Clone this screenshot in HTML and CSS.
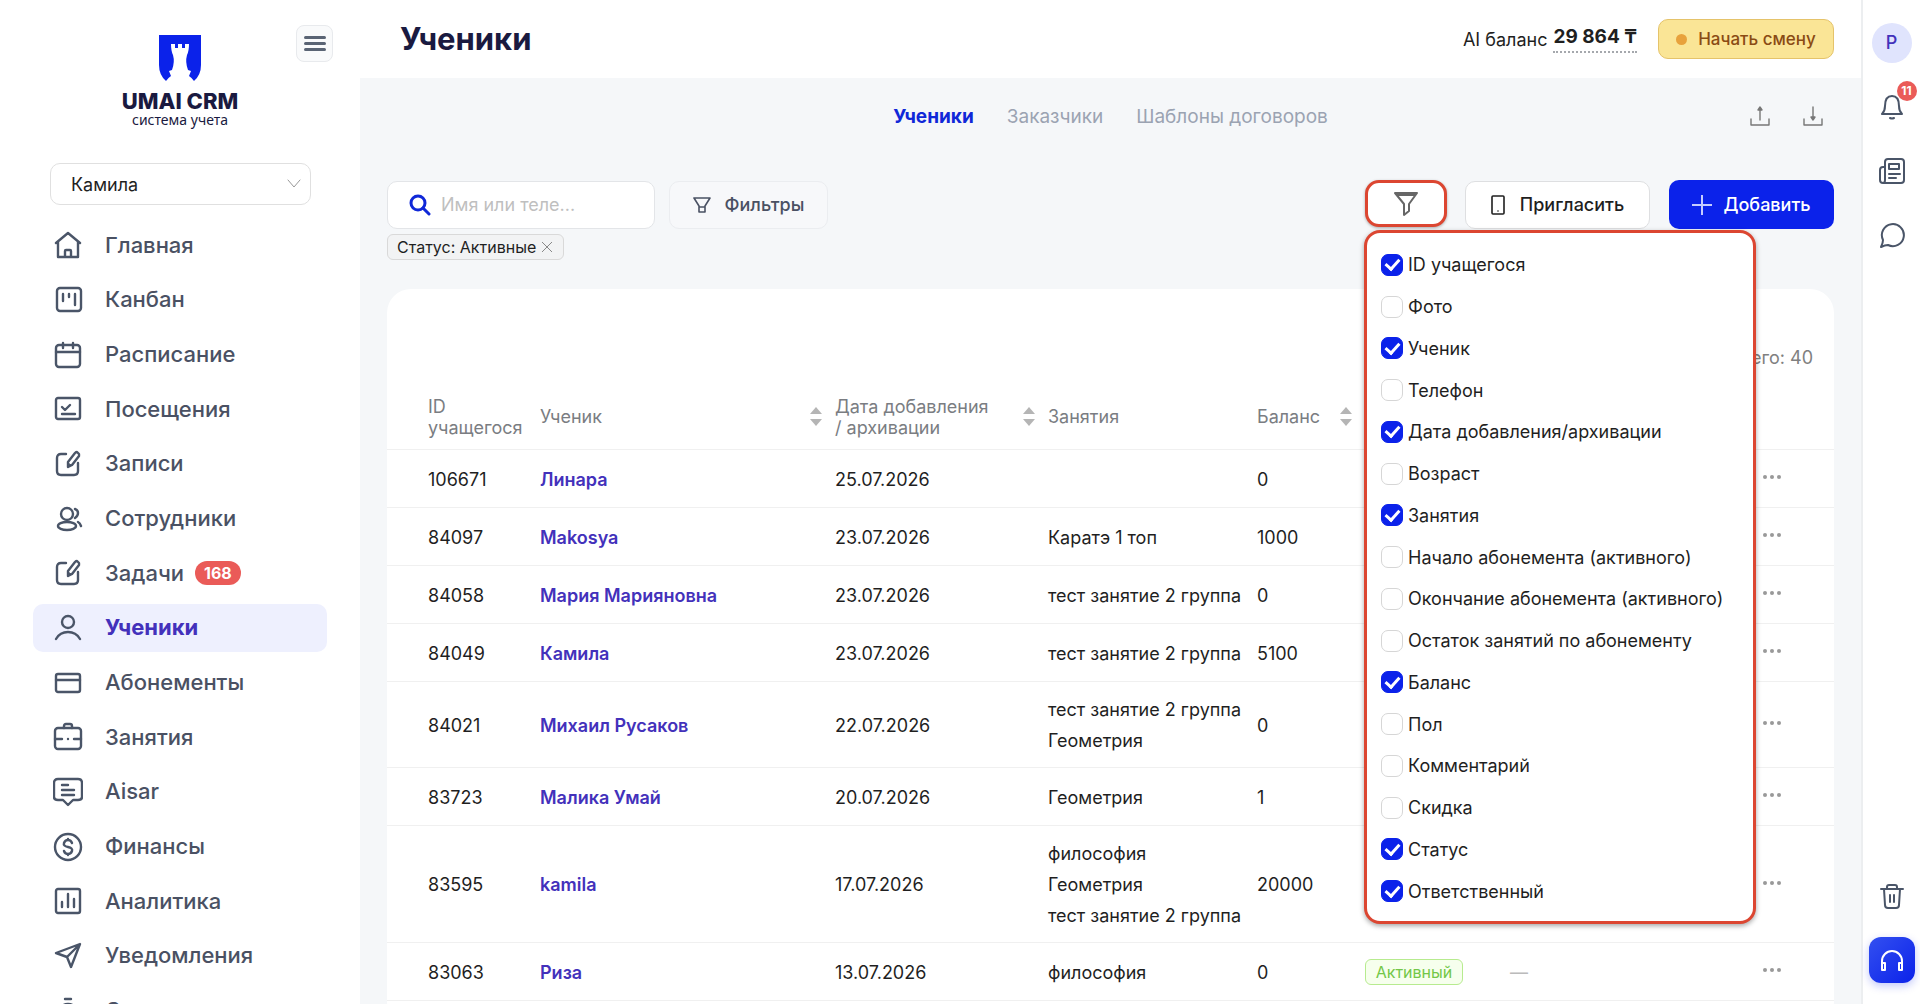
FILE: index.html
```html
<!DOCTYPE html>
<html lang="ru">
<head>
    <meta charset="UTF-8">
    <meta name="viewport" content="width=device-width, initial-scale=1.0">
    <title>Ученики - UMAI CRM</title>
    <link rel="stylesheet" href="styles.css">
</head>
<body>
    <aside class="sidebar">
        <button class="burger" type="button" aria-label="Меню"><span></span><span></span><span></span></button>
        <div class="logo">
            <svg width="42" height="46" viewBox="0 0 42 46">
                <path fill="#0b22ea" d="M0 0h42v30q0 10-7 16-2-3-5-5l2-5-3-1q-3-8-1-15 2-4 2-11h-4v4h-3V9h-4v4h-3V9h-4q0 7 2 11 2 7-1 15l-3 1 2 5q-3 2-5 5Q0 40 0 30z"/>
            </svg>
            <div class="logo-name">UMAI CRM</div>
            <div class="logo-sub">система учета</div>
        </div>
        <div class="branch">
            <select aria-label="Филиал"><option>Камила</option></select>
            <svg width="14" height="10" viewBox="0 0 14 10"><path d="M1 1l6 7 6-7"/></svg>
        </div>
        <nav class="menu">
            <a href="#"><svg viewBox="0 0 30 30"><path d="M3 13L15 3l12 10M5 12v15h20V12M12 27v-6q0-1 1-1h4q1 0 1 1v6"/></svg><span>Главная</span></a>
            <a href="#"><svg viewBox="0 0 30 30"><rect x="4" y="3" width="24" height="23" rx="3"/><path d="M10 9v7M16 9v3M22 9v11"/></svg><span>Канбан</span></a>
            <a href="#"><svg viewBox="0 0 30 30"><rect x="3" y="5" width="24" height="22" rx="3"/><path d="M3 12h24M10 3v5M20 3v5"/></svg><span>Расписание</span></a>
            <a href="#"><svg viewBox="0 0 30 30"><rect x="3" y="4" width="24" height="21" rx="2"/><path d="M9 13l3 3 5-5M9 20h13"/></svg><span>Посещения</span></a>
            <a href="#"><svg viewBox="0 0 30 30"><path d="M13 5H8Q4 5 4 9v13q0 4 4 4h13q4 0 4-4v-8M15 13l7-9q1-1 2-1l2 2v2l-7 9-4 2z"/><path class="fill" d="M15 14l3 2-3 2z"/></svg><span>Записи</span></a>
            <a href="#"><svg viewBox="0 0 30 30"><circle cx="14" cy="10" r="6"/><ellipse cx="14" cy="22" rx="9" ry="4"/><path d="M22 5q3 1 3 4t-3 5M25 18q2 1 3 4"/></svg><span>Сотрудники</span></a>
            <a href="#"><svg viewBox="0 0 30 30"><path d="M13 5H8Q4 5 4 9v13q0 4 4 4h13q4 0 4-4v-8M15 13l7-9q1-1 2-1l2 2v2l-7 9-4 2z"/><path class="fill" d="M15 14l3 2-3 2z"/></svg><span>Задачи</span><b class="count">168</b></a>
            <a href="#" class="on"><svg viewBox="0 0 30 30"><circle cx="15" cy="9" r="6"/><path d="M3 26q4-7 12-7t12 7"/></svg><span>Ученики</span></a>
            <a href="#"><svg viewBox="0 0 30 30"><rect x="3" y="6" width="24" height="18" rx="2"/><path d="M3 12h24"/></svg><span>Абонементы</span></a>
            <a href="#"><svg viewBox="0 0 30 30"><rect x="2" y="6" width="26" height="21" rx="3"/><path d="M11 6V4q0-2 2-2h4q2 0 2 2v2M2 17h7M15 17h0M21 17h7"/></svg><span>Занятия</span></a>
            <a href="#"><svg viewBox="0 0 30 30"><path d="M5 2h20q4 0 4 4v14q0 3-4 3h-5l-5 5-5-5H5q-4 0-4-3V6q0-4 4-4zM9 8h6M9 13h12M9 18h12"/></svg><span>Aisar</span></a>
            <a href="#"><svg viewBox="0 0 30 30"><circle cx="15" cy="15" r="13"/><path d="M19 11q-1-3-4-3t-4 3 4 4 4 4-4 3-4-3M15 7v1M15 22v1"/></svg><span>Финансы</span></a>
            <a href="#"><svg viewBox="0 0 30 30"><rect x="3" y="3" width="24" height="24" rx="2"/><path d="M9 16v5M15 8v13M21 13v8"/></svg><span>Аналитика</span></a>
            <a href="#"><svg viewBox="0 0 30 30"><path d="M27 3L3 12l11 4 4 10zM27 3L14 16"/></svg><span>Уведомления</span></a>
            <a href="#"><svg viewBox="0 0 30 30"><circle cx="15" cy="18" r="10"/><path d="M12 3h6M15 12v6"/></svg><span>Склад</span></a>
        </nav>
    </aside>

    <main class="main">
        <header class="header">
            <h1>Ученики</h1>
            <div class="balance">AI баланс <b>29 864 ₸</b></div>
            <button class="shift" type="button"><i></i>Начать смену</button>
        </header>

        <div class="content">
            <div class="tabs">
                <a href="#" class="on">Ученики</a>
                <a href="#">Заказчики</a>
                <a href="#">Шаблоны договоров</a>
                <div class="files">
                    <button type="button" aria-label="Импорт"><svg width="20" height="20" viewBox="0 0 20 20"><path d="M1 13v6h18v-6M10 14V2"/><path class="fill" d="M8 4l2-3 2 3z"/></svg></button>
                    <button type="button" aria-label="Экспорт"><svg width="20" height="20" viewBox="0 0 20 20"><path d="M1 13v6h18v-6M10 1v12"/><path class="fill" d="M8 11l2 3 2-3z"/></svg></button>
                </div>
            </div>

            <div class="toolbar">
                <label class="search">
                    <svg width="22" height="22" viewBox="0 0 22 22"><circle cx="9" cy="9" r="7"/><path d="M14 14l6 6"/></svg>
                    <input type="text" placeholder="Имя или теле..." aria-label="Поиск">
                </label>
                <button class="btn filters" type="button">
                    <svg width="18" height="18" viewBox="0 0 18 18"><path d="M1 2h16l-5 8v6H6v-6zM6 11h6"/></svg>Фильтры
                </button>
                <div class="columns">
                    <button class="columns-btn" type="button" aria-label="Колонки">
                        <svg width="26" height="26" viewBox="0 0 26 26"><path d="M2 2h22l-8 11v7l-5 4V13zM4 4h18"/></svg>
                    </button>
                    <div class="columns-list">
                        <label><input type="checkbox" checked>ID учащегося</label>
                        <label><input type="checkbox">Фото</label>
                        <label><input type="checkbox" checked>Ученик</label>
                        <label><input type="checkbox">Телефон</label>
                        <label><input type="checkbox" checked>Дата добавления/архивации</label>
                        <label><input type="checkbox">Возраст</label>
                        <label><input type="checkbox" checked>Занятия</label>
                        <label><input type="checkbox">Начало абонемента (активного)</label>
                        <label><input type="checkbox">Окончание абонемента (активного)</label>
                        <label><input type="checkbox">Остаток занятий по абонементу</label>
                        <label><input type="checkbox" checked>Баланс</label>
                        <label><input type="checkbox">Пол</label>
                        <label><input type="checkbox">Комментарий</label>
                        <label><input type="checkbox">Скидка</label>
                        <label><input type="checkbox" checked>Статус</label>
                        <label><input type="checkbox" checked>Ответственный</label>
                    </div>
                </div>
                <button class="btn invite" type="button">
                    <svg width="14" height="20" viewBox="0 0 14 20"><rect x="1" y="1" width="12" height="18" rx="1"/><path d="M7 16h0"/></svg>Пригласить
                </button>
                <button class="btn add" type="button">
                    <svg width="20" height="20" viewBox="0 0 20 20"><path d="M10 0v20M0 10h20"/></svg>Добавить
                </button>
            </div>
            <div class="tag">Статус: Активные
                <button type="button" aria-label="Убрать"><svg width="10" height="10" viewBox="0 0 10 10"><path d="M0 0l10 10M10 0L0 10"/></svg></button>
            </div>

            <section class="card">
                <p class="total">Всего: 40</p>
                <table>
                    <colgroup>
                        <col class="c-id"><col><col class="c-date"><col class="c-lesson"><col class="c-balance"><col class="c-status"><col class="c-resp"><col class="c-more">
                    </colgroup>
                    <thead>
                        <tr>
                            <th>ID учащегося</th>
                            <th class="sort">Ученик</th>
                            <th class="sort">Дата добавления<br>/ архивации</th>
                            <th>Занятия</th>
                            <th class="sort">Баланс</th>
                            <th aria-label="Статус"></th>
                            <th aria-label="Ответственный"></th>
                            <th></th>
                        </tr>
                    </thead>
                    <tbody>
                        <tr><td>106671</td><td><a href="#">Линара</a></td><td>25.07.2026</td><td></td><td>0</td><td></td><td></td><td><button class="more" type="button" aria-label="Ещё"><i></i><i></i><i></i></button></td></tr>
                        <tr><td>84097</td><td><a href="#">Makosya</a></td><td>23.07.2026</td><td>Каратэ 1 топ</td><td>1000</td><td></td><td></td><td><button class="more" type="button" aria-label="Ещё"><i></i><i></i><i></i></button></td></tr>
                        <tr><td>84058</td><td><a href="#">Мария Марияновна</a></td><td>23.07.2026</td><td>тест занятие 2 группа</td><td>0</td><td></td><td></td><td><button class="more" type="button" aria-label="Ещё"><i></i><i></i><i></i></button></td></tr>
                        <tr><td>84049</td><td><a href="#">Камила</a></td><td>23.07.2026</td><td>тест занятие 2 группа</td><td>5100</td><td></td><td></td><td><button class="more" type="button" aria-label="Ещё"><i></i><i></i><i></i></button></td></tr>
                        <tr><td>84021</td><td><a href="#">Михаил Русаков</a></td><td>22.07.2026</td><td>тест занятие 2 группа<br>Геометрия</td><td>0</td><td></td><td></td><td><button class="more" type="button" aria-label="Ещё"><i></i><i></i><i></i></button></td></tr>
                        <tr><td>83723</td><td><a href="#">Малика Умай</a></td><td>20.07.2026</td><td>Геометрия</td><td>1</td><td></td><td></td><td><button class="more" type="button" aria-label="Ещё"><i></i><i></i><i></i></button></td></tr>
                        <tr><td>83595</td><td><a href="#">kamila</a></td><td>17.07.2026</td><td>философия<br>Геометрия<br>тест занятие 2 группа</td><td>20000</td><td></td><td></td><td><button class="more" type="button" aria-label="Ещё"><i></i><i></i><i></i></button></td></tr>
                        <tr><td>83063</td><td><a href="#">Риза</a></td><td>13.07.2026</td><td>философия</td><td>0</td><td><span class="status">Активный</span></td><td class="none">—</td><td><button class="more" type="button" aria-label="Ещё"><i></i><i></i><i></i></button></td></tr>
                    </tbody>
                </table>
            </section>
        </div>
    </main>

    <aside class="rail">
        <a href="#" class="avatar">P</a>
        <button type="button" aria-label="Уведомления">
            <svg viewBox="0 0 26 26"><path d="M3 20h20q-3-3-3-8 0-10-7-10T6 12q0 5-3 8zM11 24q2 1 4 0"/></svg>
            <b>11</b>
        </button>
        <button type="button" aria-label="Новости">
            <svg viewBox="0 0 26 26"><path d="M6 22V4q0-3 3-3h13q3 0 3 3v18q0 3-3 3H4q-3 0-3-3V12q0-3 3-3h2M6 22q0 3-2 3M10 6h10v5H10zM10 16h11M10 20h7"/></svg>
        </button>
        <button type="button" aria-label="Чат">
            <svg viewBox="0 0 26 26"><path d="M2 25q2-4 2-7a11 11 0 1 1 5 5q-3 0-7 2z"/></svg>
        </button>
        <button class="trash" type="button" aria-label="Корзина">
            <svg viewBox="0 0 26 26"><path d="M2 6h22M8 6V4q0-2 2-2h6q2 0 2 2v2M5 6l1 16q0 3 3 3h8q3 0 3-3l1-16M11 12v7M15 12v7"/></svg>
        </button>
        <button class="support" type="button" aria-label="Поддержка">
            <svg viewBox="0 0 26 26"><path d="M3 23v-9a10 10 0 0 1 20 0v9M3 16h3v7H3zM20 16h3v7h-3z"/></svg>
        </button>
    </aside>
</body>
</html>
```
FILE: styles.css
```css
* { margin: 0; padding: 0; box-sizing: border-box; }
body {
    display: flex;
    height: 100vh;
    overflow: hidden;
    background-color: #fff;
    font-family: Inter, "Noto Sans", sans-serif;
    font-size: 18px;
    line-height: 21px;
    color: #1f1f1f;
}
a { color: inherit; text-decoration: none; }
button, input, select { font: inherit; color: inherit; }
button { background: none; border: none; cursor: pointer; }
svg { fill: none; stroke: currentColor; stroke-width: 2; stroke-linecap: round; stroke-linejoin: round; flex: none; }
svg .fill { fill: currentColor; }

/* sidebar */
.sidebar {
    position: relative;
    flex: none;
    width: 360px;
    padding-top: 35px;
    overflow: hidden;
}
.burger {
    position: absolute;
    top: 25px;
    right: 27px;
    width: 37px;
    height: 37px;
    display: flex;
    flex-direction: column;
    align-items: center;
    justify-content: center;
    gap: 3px;
    border: 1px solid #e8eaed;
    border-radius: 8px;
    background-color: #f9fafb;
}
.burger span { width: 22px; height: 3px; border-radius: 2px; background-color: #5a6474; }
.logo {
    display: flex;
    flex-direction: column;
    align-items: center;
    height: 128px;
    color: #1a1a40;
}
.logo svg { stroke: none; }
.logo-name { margin-top: 8px; font-size: 22px; font-weight: 800; line-height: 24px; }
.logo-sub { font-family: "Noto Sans", sans-serif; font-size: 14px; line-height: 14px; }
.branch { position: relative; width: 261px; margin-left: 50px; }
.branch select {
    appearance: none;
    width: 100%;
    height: 42px;
    padding-left: 20px;
    border: 1px solid #e0e0e0;
    border-radius: 10px;
    background-color: #fff;
}
.branch svg { position: absolute; right: 10px; top: 16px; color: #999; stroke-width: 1; }
.menu {
    display: grid;
    grid-template-rows: repeat(15, 1fr);
    height: 820px;
    margin: 13px 33px 0;
    align-items: center;
}
.menu a {
    display: flex;
    align-items: center;
    height: 48px;
    padding-left: 20px;
    border-radius: 10px;
    font-size: 22px;
    font-weight: 500;
    color: #4a5163;
}
.menu svg { width: 30px; height: 30px; margin-right: 22px; color: #4a5568; stroke-width: 2.4; }
.menu svg .fill { stroke-width: 1; }
.menu a.on { background-color: #eef0fe; }
.menu a.on span { font-weight: 700; color: #4331bb; }
.count {
    margin-left: 11px;
    padding: 0 9px;
    border-radius: 12px;
    background-color: #ea5b58;
    color: #fff;
    font-size: 16px;
    line-height: 24px;
}

/* header */
.main { flex: 1; min-width: 0; background-color: #f5f7f9; }
.header {
    display: flex;
    align-items: center;
    height: 78px;
    padding: 0 27px 0 40px;
    background-color: #fff;
}
.header h1 { margin-right: auto; font-size: 31px; line-height: 36px; color: #1a1a40; }
.balance { display: flex; align-items: center; gap: 6px; }
.balance b {
    padding-bottom: 4px;
    border-bottom: 2px dotted #a5a8ad;
    font-size: 19px;
}
.shift {
    display: flex;
    align-items: center;
    justify-content: center;
    gap: 11px;
    width: 176px;
    height: 40px;
    margin-left: 21px;
    border: 1px solid #e5c36a;
    border-radius: 10px;
    background-color: #fae596;
    color: #8a4b14;
    font-size: 17px;
    font-weight: 500;
}
.shift i { width: 11px; height: 11px; border-radius: 50%; background-color: #e8a23c; }

/* content */
.content { padding: 0 27px; }
.tabs {
    position: relative;
    display: flex;
    align-items: center;
    justify-content: center;
    gap: 33px;
    height: 76px;
    color: #9ba3b2;
    font-size: 19px;
}
.tabs .on { color: #1028d8; font-weight: 700; }
.files { position: absolute; right: 11px; top: 28px; display: flex; gap: 33px; color: #777; }
.files button { height: 20px; }
.files svg { stroke-width: 1.4; display: block; }
.toolbar {
    display: flex;
    align-items: center;
    height: 49px;
    margin-top: 26px;
}
.search {
    display: flex;
    align-items: center;
    gap: 10px;
    width: 268px;
    height: 48px;
    padding-left: 21px;
    border: 1px solid #e3e5e8;
    border-radius: 10px;
    background-color: #fff;
}
.search svg { color: #1028d8; stroke-width: 3; }
.search input { width: 200px; border: none; outline: none; background: none; }
.search input::placeholder { color: #bfbfbf; }
.btn {
    display: flex;
    align-items: center;
    justify-content: center;
    height: 48px;
    border: 1px solid #dedfe1;
    border-radius: 10px;
    background-color: #fff;
    font-weight: 500;
}
.filters {
    width: 159px;
    gap: 14px;
    margin-left: 14px;
    border-color: #ebedf0;
    background-color: #f7f8fa;
    color: #4a5163;
}
.filters svg, .invite svg { stroke-width: 1.6; }
.invite { width: 185px; gap: 15px; margin: 0 19px 0 18px; }
.add { width: 165px; height: 49px; gap: 11px; border: none; background-color: #0b22ea; color: #fff; }
.add svg { stroke: #c5ccff; }
.columns { position: relative; align-self: flex-start; margin-left: auto; }
.columns-btn {
    display: flex;
    align-items: center;
    justify-content: center;
    width: 82px;
    height: 47px;
    border: 3px solid #dc4631;
    border-radius: 14px;
    background-color: #fff;
    box-shadow: 0 1px 3px rgba(0, 0, 0, 0.3);
    color: #666;
}
.columns-list {
    position: absolute;
    z-index: 2;
    top: 50px;
    left: -1px;
    display: grid;
    grid-template-rows: repeat(16, 1fr);
    width: 392px;
    height: 694px;
    padding: 11px 14px 9px;
    border: 3px solid #dc4631;
    border-radius: 16px;
    background-color: #fff;
    box-shadow: 0 2px 5px rgba(0, 0, 0, 0.35);
}
.columns-list label { display: flex; align-items: center; gap: 5px; white-space: nowrap; }
.columns-list input {
    appearance: none;
    display: flex;
    align-items: center;
    justify-content: center;
    width: 22px;
    height: 22px;
    border: 1px solid #d6d6d6;
    border-radius: 7px;
}
.columns-list input:checked { border-color: #0b22ea; background-color: #0b22ea; }
.columns-list input:checked::before {
    content: "";
    width: 6px;
    height: 11px;
    margin-bottom: 3px;
    border: solid #fff;
    border-width: 0 3px 3px 0;
    transform: rotate(42deg);
}
.tag {
    display: inline-flex;
    align-items: center;
    gap: 6px;
    height: 26px;
    margin-top: 5px;
    padding: 0 11px 0 9px;
    border: 1px solid #d9d9d9;
    border-radius: 6px;
    background-color: #f2f3f4;
    font-size: 16px;
    vertical-align: top;
}
.tag button { display: flex; }
.tag svg { color: #888; stroke-width: 1; }

/* table */
.card { margin-top: 29px; padding: 55px 0 24px; border-radius: 24px; background-color: #fff; }
.total { padding: 0 21px 12px 0; line-height: 28px; text-align: right; color: #808080; }
table { width: 100%; table-layout: fixed; border-spacing: 0; }
.c-id { width: 148px; }
.c-date { width: 213px; }
.c-lesson { width: 209px; }
.c-balance { width: 108px; }
.c-status { width: 145px; }
.c-resp { width: 253px; }
.c-more { width: 76px; }
th, td { padding: 0 5px; border-bottom: 1px solid #f0f0f0; text-align: left; }
th:first-child, td:first-child { padding-left: 41px; }
th { position: relative; height: 66px; font-weight: 400; color: #7a7d82; }
th.sort { padding-right: 24px; }
th.sort::before, th.sort::after {
    content: "";
    position: absolute;
    right: 8px;
    border: 6px solid transparent;
}
th.sort::before { top: 17px; border-bottom: 7px solid #b5b5b5; }
th.sort::after { bottom: 17px; border-top: 7px solid #b5b5b5; }
td { height: 58px; padding: 12px 5px 11px; line-height: 31px; white-space: nowrap; }
td a { font-weight: 600; color: #4331bb; }
.status {
    display: block;
    width: 98px;
    border: 1px solid #b7eb8f;
    border-radius: 6px;
    background-color: #f6ffed;
    color: #73c748;
    font-size: 16px;
    line-height: 24px;
    text-align: center;
}
td.none { color: #bbb; }
.more { display: flex; gap: 3px; padding-bottom: 4px; }
.more i { width: 4px; height: 4px; border-radius: 50%; background-color: #999; }

/* right rail */
.rail {
    display: flex;
    flex-direction: column;
    align-items: center;
    flex: none;
    width: 59px;
    padding: 23px 0 21px;
    border-left: 2px solid #eceef0;
    color: #4a5568;
}
.avatar {
    width: 40px;
    height: 40px;
    margin-bottom: 12px;
    border-radius: 50%;
    background-color: #e0e4fd;
    color: #4331bb;
    font-weight: 500;
    line-height: 40px;
    text-align: center;
}
.rail button {
    position: relative;
    display: flex;
    align-items: center;
    justify-content: center;
    width: 40px;
    height: 64px;
}
.rail svg { width: 26px; height: 26px; }
.rail b {
    position: absolute;
    top: 6px;
    right: -5px;
    width: 20px;
    border-radius: 10px;
    background-color: #ea5b58;
    color: #fff;
    font-size: 12px;
    line-height: 20px;
}
.rail .trash { margin-top: auto; margin-bottom: 9px; }
.rail .support {
    width: 46px;
    height: 46px;
    border-radius: 12px;
    background: linear-gradient(135deg, #3350f0, #0b22ea);
    box-shadow: 0 3px 8px rgba(11, 34, 234, 0.25);
    color: #fff;
}
```
